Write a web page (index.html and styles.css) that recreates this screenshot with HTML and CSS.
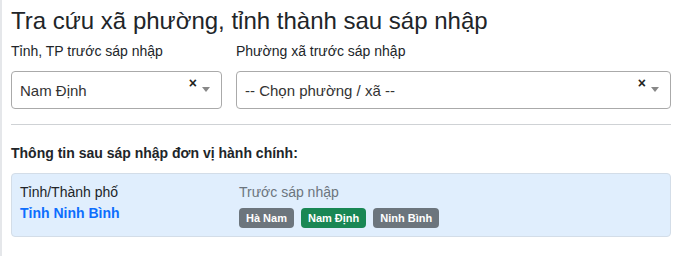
FILE: index.html
```html
<!DOCTYPE html>
<html lang="vi">
<head>
  <meta charset="UTF-8" />
  <meta name="viewport" content="width=device-width, initial-scale=1.0" />
  <title>Tra cứu xã phường sau sáp nhập</title>
  <link rel="stylesheet" href="styles.css">
</head>
<body>
  <div id="container">
    <h1 class="title">Tra cứu xã phường, tỉnh thành sau sáp nhập</h1>

    <div class="form-row">
      <div class="field">
        <label class="field-label">Tỉnh, TP trước sáp nhập</label>
        <div class="select">
          <span class="select-text">Nam Định</span>
          <span class="select-clear">×</span>
          <span class="select-arrow"></span>
        </div>
      </div>
      <div class="field">
        <label class="field-label">Phường xã trước sáp nhập</label>
        <div class="select">
          <span class="select-text">-- Chọn phường / xã --</span>
          <span class="select-clear">×</span>
          <span class="select-arrow"></span>
        </div>
      </div>
    </div>

    <hr class="divider">

    <div class="result-title">Thông tin sau sáp nhập đơn vị hành chính:</div>

    <div class="result-box">
      <div class="result-col">
        <div class="result-label">Tỉnh/Thành phố</div>
        <div class="result-name">Tỉnh Ninh Bình</div>
      </div>
      <div class="result-col">
        <div class="result-muted">Trước sáp nhập</div>
        <div class="badges">
          <span class="badge">Hà Nam</span>
          <span class="badge badge-active">Nam Định</span>
          <span class="badge">Ninh Bình</span>
        </div>
      </div>
    </div>
  </div>
</body>
</html>
```

FILE: styles.css
```css
html, body {
  margin: 0;
  padding: 0;
  background: #fff;
  font-family: "Liberation Sans", Arial, sans-serif;
  color: #212529;
}

#container {
  border-left: 2px solid #e5e7ea;
  padding: 5px 13px 0 9px;
  width: 660px;
  min-height: 100vh;
}

.title {
  font-size: 24px;
  font-weight: normal;
  margin: 0 0 5px 0;
  line-height: 32px;
}

.form-row {
  display: grid;
  grid-template-columns: 211px 1fr;
  gap: 14px;
}

.field-label {
  display: block;
  font-size: 14px;
  line-height: 18px;
  margin-bottom: 11px;
}

.select {
  position: relative;
  height: 36px;
  border: 1px solid #aaa;
  border-radius: 4px;
  display: flex;
  align-items: center;
  padding-left: 8px;
}

.select-text {
  font-size: 15px;
  color: #333;
}

.select-clear {
  position: absolute;
  right: 24px;
  top: 3px;
  font-size: 14px;
  font-weight: bold;
  color: #222;
}

.select-arrow {
  position: absolute;
  right: 11px;
  top: 15px;
  border-top: 5px solid #888;
  border-left: 4px solid transparent;
  border-right: 4px solid transparent;
}

.divider {
  border: none;
  border-top: 1px solid #cfd2d5;
  margin: 15px 0 0 0;
}

.result-title {
  font-size: 14px;
  font-weight: bold;
  margin: 20px 0 12px 0;
}

.result-box {
  display: grid;
  grid-template-columns: 219px 1fr;
  background: #e0eefd;
  border: 1px solid #d3dde8;
  border-radius: 4px;
  padding: 9px 8px 8px 8px;
}

.result-label {
  font-size: 14px;
  line-height: 18px;
}

.result-name {
  font-size: 14px;
  font-weight: bold;
  color: #0d6efd;
  margin-top: 4px;
}

.result-muted {
  font-size: 14px;
  line-height: 18px;
  color: #6c757d;
}

.badges {
  display: flex;
  gap: 7px;
  margin-top: 7px;
}

.badge {
  background: #6c757d;
  color: #fff;
  font-size: 11px;
  font-weight: bold;
  padding: 4px 7px;
  border-radius: 4px;
}

.badge-active {
  background: #198754;
}
```
